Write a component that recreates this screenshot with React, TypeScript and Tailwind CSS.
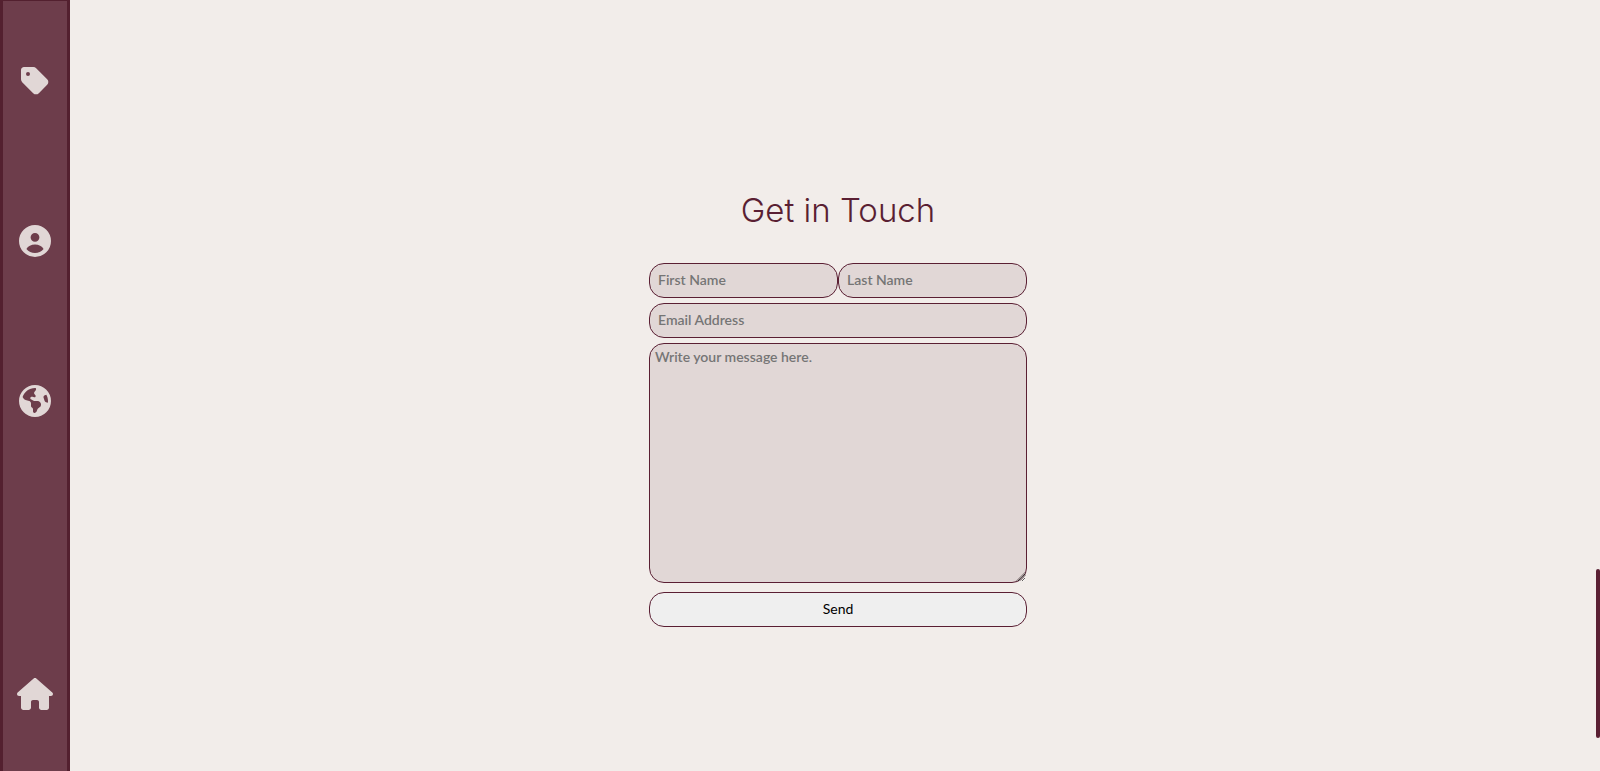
import type { ReactNode } from "react";
import { FaTag, FaHouse, FaEarthAmericas } from "react-icons/fa6";

function UserCircleIcon() {
  return (
    <svg viewBox="0 0 32 32" className="size-8" fill="currentColor" aria-hidden="true">
      <path
        fillRule="evenodd"
        d="M16 0a16 16 0 1 0 0 32a16 16 0 1 0 0-32ZM16 7.9a4.4 4.4 0 1 1 0 8.8a4.4 4.4 0 1 1 0-8.8ZM7.4 24C9 21.2 12.200 19.600 16 19.600s7 1.600 8.600 4.400c-2.200 2.700-5.200 4.100-8.600 4.100s-6.400-1.400-8.600-4.100Z"
      />
    </svg>
  );
}

function ResizeGrip() {
  return (
    <svg
      viewBox="0 0 12 12"
      className="pointer-events-none absolute right-px bottom-px size-3"
      fill="none"
      stroke="#4a3a40"
      strokeWidth="0.8"
      aria-hidden="true"
    >
      <path d="M2 11.500L11.500 2M5.500 11L11.500 5" />
    </svg>
  );
}

function NavItem({ href, label, children }: { href: string; label: string; children: ReactNode }) {
  return (
    <a href={href} aria-label={label} className="flex h-40 items-center justify-center">
      {children}
    </a>
  );
}

const field =
  "rounded-[15px] border border-[#5a1f33] bg-[#e1d7d6] text-sm font-semibold text-[#5a1f33] placeholder:text-[#757575] focus:outline-none";

export default function App() {
  return (
    <div className="flex min-h-screen bg-[#f2edea] font-['Lato',sans-serif]">
      <nav
        aria-label="Main"
        className="flex w-[70px] shrink-0 flex-col justify-between border-x-[3px] border-t border-[#53202f] bg-[#6d3d4b] text-[#e1d7d6]"
      >
        <div>
          <NavItem href="#products" label="Products">
            <FaTag className="size-8" />
          </NavItem>
          <NavItem href="#about" label="About">
            <UserCircleIcon />
          </NavItem>
          <NavItem href="#world" label="World">
            <FaEarthAmericas className="size-8" />
          </NavItem>
        </div>
        <a href="#home" aria-label="Home" className="flex h-[154px] items-center justify-center">
          <FaHouse className="h-8 w-9" />
        </a>
      </nav>

      <main className="flex flex-1 flex-col items-center justify-center pt-11 pl-1.5">
        <h1 className="mb-[31px] font-['Inter',sans-serif] text-[33px] leading-[44px] font-light text-[#5a1f33]">
          Get in Touch
        </h1>
        <form className="flex w-full max-w-[378px] flex-col gap-[5px]">
          <div className="flex">
            <input type="text" aria-label="First Name" placeholder="First Name" className={`${field} h-[35px] w-1/2 px-2 pb-0.5`} />
            <input type="text" aria-label="Last Name" placeholder="Last Name" className={`${field} h-[35px] w-1/2 px-2 pb-0.5`} />
          </div>
          <input type="email" aria-label="Email Address" placeholder="Email Address" className={`${field} h-[35px] px-2 pb-0.5`} />
          <div className="relative mb-1 flex">
            <textarea
              aria-label="Message"
              placeholder="Write your message here."
              className={`${field} h-60 w-full resize px-[5px] py-[3px]`}
            />
            <ResizeGrip />
          </div>
          <button
            type="submit"
            className="h-[35px] rounded-[15px] border border-[#5a1f33] bg-[#efefef] pb-0.5 text-sm text-black"
          >
            Send
          </button>
        </form>
      </main>

      <div aria-hidden="true" className="fixed right-0 bottom-[33px] h-[169px] w-1 rounded-sm bg-[#5a1f33]" />
    </div>
  );
}
